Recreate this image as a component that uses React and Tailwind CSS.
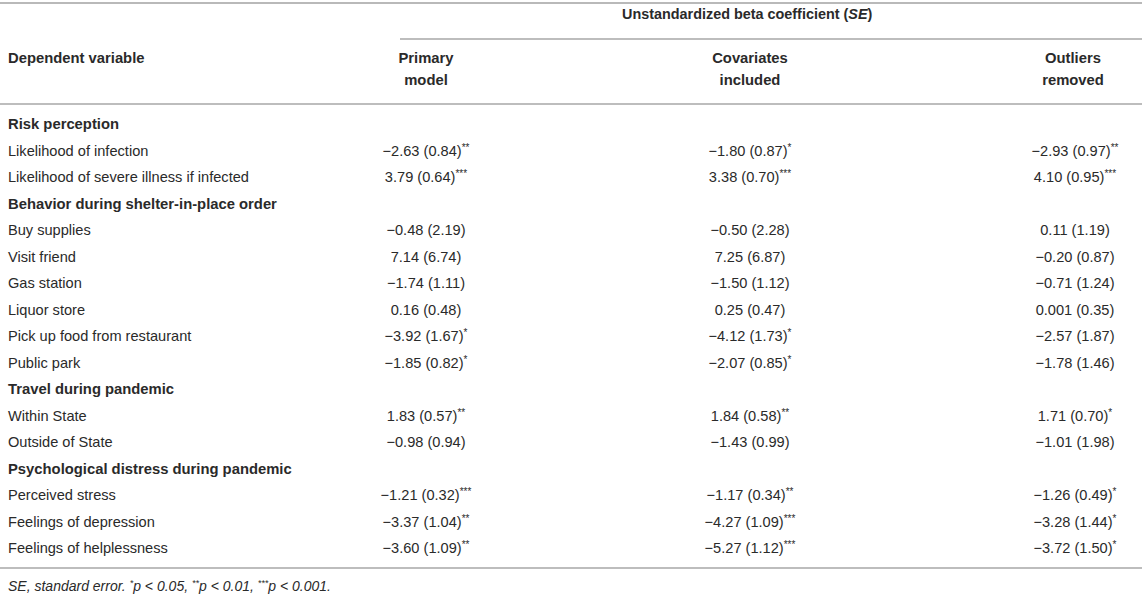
const sections = [
  {
    title: 'Risk perception',
    rows: [
      ['Likelihood of infection', ['−2.63 (0.84)', '**'], ['−1.80 (0.87)', '*'], ['−2.93 (0.97)', '**']],
      ['Likelihood of severe illness if infected', ['3.79 (0.64)', '***'], ['3.38 (0.70)', '***'], ['4.10 (0.95)', '***']],
    ],
  },
  {
    title: 'Behavior during shelter-in-place order',
    rows: [
      ['Buy supplies', ['−0.48 (2.19)'], ['−0.50 (2.28)'], ['0.11 (1.19)']],
      ['Visit friend', ['7.14 (6.74)'], ['7.25 (6.87)'], ['−0.20 (0.87)']],
      ['Gas station', ['−1.74 (1.11)'], ['−1.50 (1.12)'], ['−0.71 (1.24)']],
      ['Liquor store', ['0.16 (0.48)'], ['0.25 (0.47)'], ['0.001 (0.35)']],
      ['Pick up food from restaurant', ['−3.92 (1.67)', '*'], ['−4.12 (1.73)', '*'], ['−2.57 (1.87)']],
      ['Public park', ['−1.85 (0.82)', '*'], ['−2.07 (0.85)', '*'], ['−1.78 (1.46)']],
    ],
  },
  {
    title: 'Travel during pandemic',
    rows: [
      ['Within State', ['1.83 (0.57)', '**'], ['1.84 (0.58)', '**'], ['1.71 (0.70)', '*']],
      ['Outside of State', ['−0.98 (0.94)'], ['−1.43 (0.99)'], ['−1.01 (1.98)']],
    ],
  },
  {
    title: 'Psychological distress during pandemic',
    rows: [
      ['Perceived stress', ['−1.21 (0.32)', '***'], ['−1.17 (0.34)', '**'], ['−1.26 (0.49)', '*']],
      ['Feelings of depression', ['−3.37 (1.04)', '**'], ['−4.27 (1.09)', '***'], ['−3.28 (1.44)', '*']],
      ['Feelings of helplessness', ['−3.60 (1.09)', '**'], ['−5.27 (1.12)', '***'], ['−3.72 (1.50)', '*']],
    ],
  },
];

const grid = 'grid grid-cols-[360px_132px_516px_134px]';

function Value({ v }) {
  return (
    <div className="text-center">
      {v[0]}
      {v[1] && <sup className="text-[10px] -top-[0.5em]">{v[1]}</sup>}
    </div>
  );
}

export default function App() {
  return (
    <div
      className="w-[1142px] h-[596px] bg-white text-[14.6px] text-[#2a2a2a] overflow-hidden"
      style={{ fontFamily: '"Liberation Sans", Arial, sans-serif' }}
    >
      <div className="mt-[2px] border-t-2 border-[#b9b9b9]">
        {/* header */}
        <div className={grid}>
          <div />
          <div className="col-span-3">
            <div className="h-[34px] pt-[0px] pl-[262px] font-bold text-[14.4px] leading-[20px]">
              Unstandardized beta coefficient (<i>SE</i>)
            </div>
          </div>
        </div>
        <div className="ml-[400px] border-t-2 border-[#bdbdbd]" />
        <div className={`${grid} h-[65px] font-bold text-[14.8px] leading-[22px] pt-[7px] border-b-2 border-[#bdbdbd]`}>
          <div className="pl-[8px]">Dependent variable</div>
          <div className="text-center">Primary<br />model</div>
          <div className="text-center">Covariates<br />included</div>
          <div className="text-center pr-[4px]">Outliers<br />removed</div>
        </div>

        {/* body */}
        <div className="pt-[6px] pb-[5px] border-b-2 border-[#bdbdbd]">
          {sections.map((s) => (
            <div key={s.title}>
              <div className="pl-[8px] h-[26.5px] leading-[26.5px] font-bold text-[14.8px]">{s.title}</div>
              {s.rows.map((r) => (
                <div key={r[0]} className={`${grid} h-[26.5px] leading-[26.5px]`}>
                  <div className="pl-[8px]">{r[0]}</div>
                  <Value v={r[1]} />
                  <Value v={r[2]} />
                  <Value v={r[3]} />
                </div>
              ))}
            </div>
          ))}
        </div>

        <div className="pl-[8px] pt-[8px] text-[14px] italic leading-[18px]">
          SE, standard error. <sup className="text-[9px]">*</sup>p &lt; 0.05, <sup className="text-[9px]">**</sup>p &lt; 0.01,{' '}
          <sup className="text-[9px]">***</sup>p &lt; 0.001.
        </div>
      </div>
    </div>
  );
}
